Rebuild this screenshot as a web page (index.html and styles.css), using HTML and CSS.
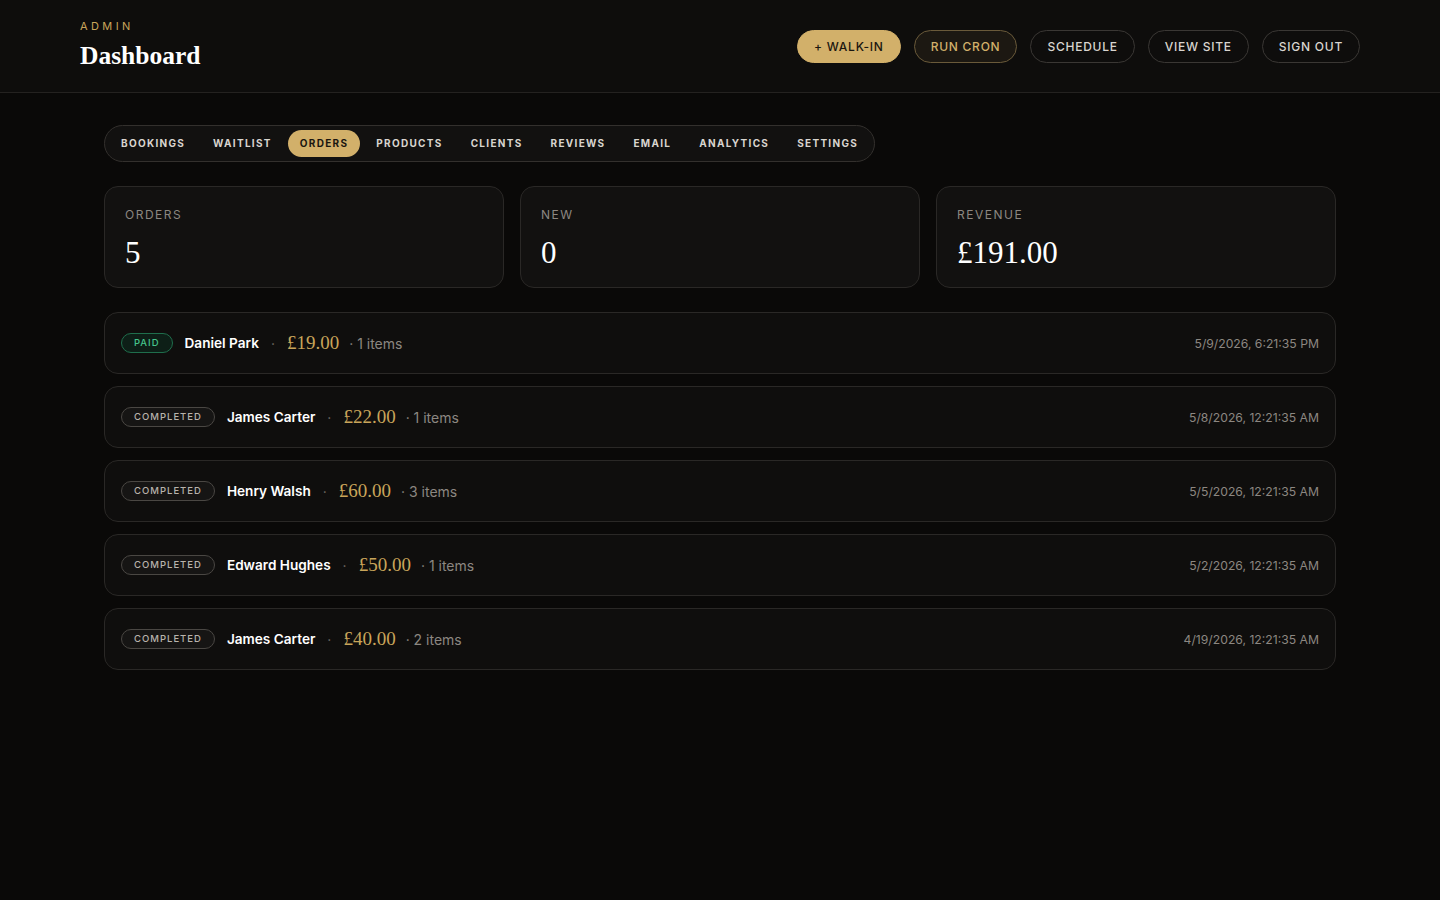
FILE: index.html
```html
<!DOCTYPE html>
<html lang="en">
<head>
<meta charset="utf-8">
<title>Admin Dashboard</title>
<link rel="stylesheet" href="styles.css">
</head>
<body>
<header class="topbar">
  <div class="brand">
    <div class="eyebrow">ADMIN</div>
    <h1 class="title">Dashboard</h1>
  </div>
  <div class="actions">
    <button class="btn btn-gold">+ WALK-IN</button>
    <button class="btn btn-cron">RUN CRON</button>
    <button class="btn">SCHEDULE</button>
    <button class="btn">VIEW SITE</button>
    <button class="btn">SIGN OUT</button>
  </div>
</header>
<main class="main">
  <nav class="tabs">
    <a class="tab">BOOKINGS</a>
    <a class="tab">WAITLIST</a>
    <a class="tab active">ORDERS</a>
    <a class="tab">PRODUCTS</a>
    <a class="tab">CLIENTS</a>
    <a class="tab">REVIEWS</a>
    <a class="tab">EMAIL</a>
    <a class="tab">ANALYTICS</a>
    <a class="tab">SETTINGS</a>
  </nav>
  <section class="stats">
    <div class="stat"><div class="stat-label">ORDERS</div><div class="stat-value">5</div></div>
    <div class="stat"><div class="stat-label">NEW</div><div class="stat-value">0</div></div>
    <div class="stat"><div class="stat-label">REVENUE</div><div class="stat-value">£191.00</div></div>
  </section>
  <section class="orders">
    <div class="order">
      <div class="order-info">
        <span class="badge badge-paid">PAID</span>
        <span class="name">Daniel Park</span>
        <span class="sep">·</span>
        <span class="price">£19.00</span>
        <span class="items">· 1 items</span>
      </div>
      <span class="date">5/9/2026, 6:21:35 PM</span>
    </div>
    <div class="order">
      <div class="order-info">
        <span class="badge">COMPLETED</span>
        <span class="name">James Carter</span>
        <span class="sep">·</span>
        <span class="price">£22.00</span>
        <span class="items">· 1 items</span>
      </div>
      <span class="date">5/8/2026, 12:21:35 AM</span>
    </div>
    <div class="order">
      <div class="order-info">
        <span class="badge">COMPLETED</span>
        <span class="name">Henry Walsh</span>
        <span class="sep">·</span>
        <span class="price">£60.00</span>
        <span class="items">· 3 items</span>
      </div>
      <span class="date">5/5/2026, 12:21:35 AM</span>
    </div>
    <div class="order">
      <div class="order-info">
        <span class="badge">COMPLETED</span>
        <span class="name">Edward Hughes</span>
        <span class="sep">·</span>
        <span class="price">£50.00</span>
        <span class="items">· 1 items</span>
      </div>
      <span class="date">5/2/2026, 12:21:35 AM</span>
    </div>
    <div class="order">
      <div class="order-info">
        <span class="badge">COMPLETED</span>
        <span class="name">James Carter</span>
        <span class="sep">·</span>
        <span class="price">£40.00</span>
        <span class="items">· 2 items</span>
      </div>
      <span class="date">4/19/2026, 12:21:35 AM</span>
    </div>
  </section>
</main>
</body>
</html>
```
FILE: styles.css
```css
* { box-sizing: border-box; }
html, body { margin: 0; padding: 0; }
body {
  background: #0a0908;
  color: #f2efe9;
  font-family: Inter, "Liberation Sans", sans-serif;
  min-height: 900px;
}
.topbar {
  height: 93px;
  display: flex;
  align-items: center;
  justify-content: space-between;
  padding: 0 80px;
  background: #0e0d0c;
  border-bottom: 1px solid #242220;
}
.brand { margin-top: 2px; }
.eyebrow {
  color: #c9a55a;
  font-size: 11px;
  letter-spacing: 3.4px;
  line-height: 14px;
  margin-top: -4px;
}
.title {
  margin: 7px 0 0;
  font-family: "Liberation Serif", "DejaVu Serif", serif;
  font-weight: 700;
  font-size: 25.5px;
  line-height: 32px;
  color: #ffffff;
}
.actions { display: flex; gap: 13px; }
.btn {
  font-family: Inter, "Liberation Sans", sans-serif;
  height: 33px;
  padding: 0 16px;
  border-radius: 999px;
  border: 1px solid #3a3734;
  background: transparent;
  color: #d9d5cf;
  font-size: 12px;
  letter-spacing: 0.75px;
  font-weight: 500;
}
.btn-gold {
  background: #d2b06a;
  border-color: #d2b06a;
  color: #1a1610;
}
.btn-cron {
  background: #1c1812;
  border-color: #6a5a3a;
  color: #d2b06a;
}
.main {
  width: 1232px;
  margin: 0 auto;
  padding-top: 32px;
}
.tabs {
  display: inline-flex;
  align-items: center;
  gap: 4px;
  padding: 4px;
  border: 1px solid #33302d;
  border-radius: 999px;
  background: #121110;
  height: 37px;
}
.tab {
  font-size: 10px;
  font-weight: 700;
  letter-spacing: 1.3px;
  color: #d9d5cf;
  padding: 0 12px;
  height: 27px;
  line-height: 27px;
  border-radius: 999px;
}
.tab.active {
  background: #d2b06a;
  color: #1a1610;
}
.stats {
  display: grid;
  grid-template-columns: repeat(3, 1fr);
  gap: 16px;
  margin-top: 24px;
}
.stat {
  height: 102px;
  background: #121110;
  border: 1px solid #2a2826;
  border-radius: 14px;
  padding: 20px 20px 0;
}
.stat-label {
  font-size: 12px;
  letter-spacing: 1.5px;
  color: #8c8781;
  line-height: 16px;
}
.stat-value {
  margin-top: 13px;
  font-family: "Liberation Serif", "DejaVu Serif", serif;
  font-size: 31px;
  line-height: 34px;
  color: #ffffff;
}
.orders {
  display: flex;
  flex-direction: column;
  gap: 12px;
  margin-top: 24px;
}
.order {
  height: 62px;
  display: flex;
  align-items: center;
  justify-content: space-between;
  padding: 0 16px;
  background: #0f0e0d;
  border: 1px solid #2a2826;
  border-radius: 14px;
}
.order-info { display: flex; align-items: center; }
.badge {
  height: 20px;
  line-height: 18px;
  padding: 0 12px;
  border-radius: 999px;
  border: 1px solid #4a4743;
  background: #161514;
  color: #b8b3ac;
  font-size: 9.5px;
  letter-spacing: 1px;
  font-weight: 500;
  margin-right: 12px;
}
.badge-paid {
  border-color: #1f6e4c;
  background: #0d1f17;
  color: #45c48c;
}
.name {
  font-size: 13.6px;
  font-weight: 600;
  color: #ffffff;
}
.sep {
  color: #6f6a64;
  font-size: 14px;
  margin: 0 12px;
}
.price {
  font-family: "Liberation Serif", "DejaVu Serif", serif;
  font-size: 19px;
  color: #c9a55a;
  margin-right: 10px;
}
.items {
  font-size: 14px;
  color: #8c8781;
}
.date {
  font-size: 12.2px;
  color: #8c8781;
}
```
